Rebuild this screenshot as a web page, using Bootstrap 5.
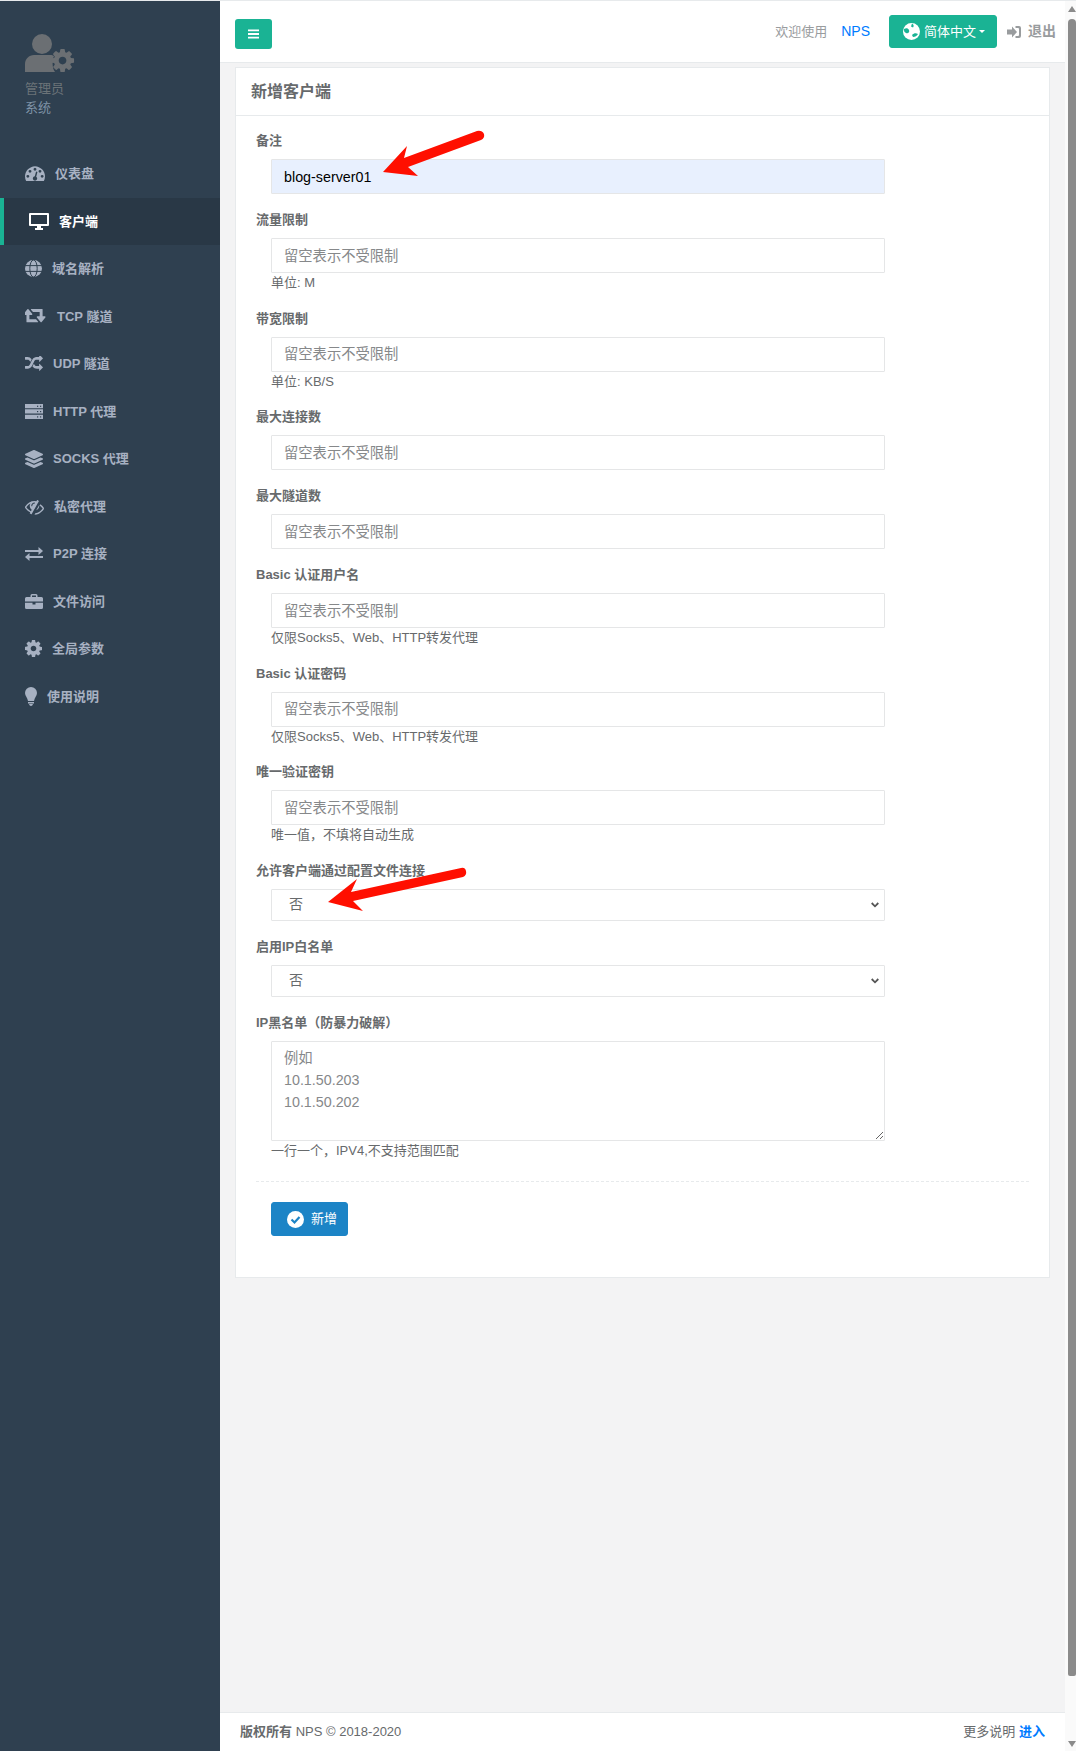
<!DOCTYPE html>
<html lang="zh-CN">
<head>
    <meta charset="UTF-8">
    <meta name="viewport" content="width=device-width, initial-scale=1.0">
    <title>新增客户端</title>
    <link href="https://cdn.jsdelivr.net/npm/bootstrap@5.3.0/dist/css/bootstrap.min.css" rel="stylesheet">
    <style>
        body {
            font-family: "Liberation Sans", "Noto Sans CJK SC", sans-serif;
            font-size: 13px;
            color: #676a6c;
            background: #f3f3f4;
            overflow: hidden;
        }
        .page-wrap { height: 1751px; border-top: 1px solid #e7eaec; }

        .side-bar { width: 220px; background: #2f4050; flex: none; }
        .side-head { height: 149px; padding: 32px 0 0 25px; }
        .side-head svg { display: block; }
        .side-role { margin-top: 6px; line-height: 19px; color: #6b7378; font-size: 13px; }
        .side-sys { line-height: 19px; color: #7f93a7; font-size: 13px; }
        .side-bar .nav-link {
            height: 47.5px;
            padding: 0 0 0 25px;
            gap: 10px;
            color: #a7b1c2;
            font-weight: 600;
            font-size: 13px;
        }
        .side-bar .nav-link.active {
            background: #293846;
            border-left: 4px solid #1ab394;
            color: #fff;
        }

        .top-bar { height: 62px; background: #fff; border-bottom: 1px solid #e7eaec; padding: 0 9px 0 15px; }
        .menu-btn { width: 37px; height: 30px; background: #1ab394; border-radius: 3px; margin-top: 4px; }
        .welcome { color: #999c9e; margin-right: 14px; }
        .brand-link { color: #007bff; font-size: 14px; text-decoration: none; margin-right: 19px; }
        .lang-btn {
            width: 108px; height: 33px; padding: 0 0 0 13px;
            background: #1ab394; border-color: #1ab394; color: #fff;
            font-size: 13px; font-weight: 400; border-radius: 3px;
            gap: 4px;
        }
        .lang-btn::after { margin-left: -1px; }
        .logout { color: #999c9e; font-size: 14px; font-weight: 600; margin-left: 10px; gap: 7px; text-decoration: none; }

        .form-box { margin: 4px 15px 0; background: #fff; border: 1px solid #e7eaec; border-radius: 0; height: 1211px; }
        .form-box .card-header {
            height: 48px; padding: 0 15px; background: #fff; border-bottom: 1px solid #e7eaec;
            font-size: 16px; font-weight: 600; line-height: 47px; border-radius: 0;
        }
        .form-box .card-body { padding: 15px 20px 0; }
        .fld { margin-bottom: 16px; }
        .fld-label { display: block; line-height: 19px; margin-bottom: 9px; font-weight: 700; font-size: 13px; }
        .fld-box { width: 614px; margin-left: 15px; }
        .fld-box .form-control, .fld-box .form-select {
            border: 1px solid #e5e6e7; border-radius: 1px; font-size: 14.3px; color: #676a6c;
        }
        .fld-box .form-control { height: 35px; padding: 0 12px; }
        .fld-box .form-control::placeholder { color: #86888a; opacity: 1; }
        .fld-box .auto-filled { background: #e8f0fe; color: #000; }
        .fld-box .form-select {
            height: 32px; padding: 0 36px 0 17px; font-size: 14px;
            background-image: url("data:image/svg+xml,%3csvg xmlns='http://www.w3.org/2000/svg' viewBox='0 0 8 6'%3e%3cpath fill='none' stroke='%23555' stroke-width='1.8' d='M.7 1l3.300 3.300L7.300 1'/%3e%3c/svg%3e");
            background-position: right 5px center;
            background-size: 8px 6px;
        }
        .fld-box textarea.form-control { height: 100px; padding: 5px 12px; line-height: 22px; }
        .fld-help { line-height: 19.5px; color: #676a6c; font-size: 13px; }
        .dash-line { border-top: 1px dashed #e7eaec; margin: 21px 0 20px; }
        .save-btn {
            width: 77px; height: 34px; padding: 0 0 0 15px; margin-left: 15px;
            background: #1c84c6; border-color: #1c84c6; color: #fff;
            font-size: 13px; font-weight: 400; border-radius: 3px; gap: 7px;
        }

        .foot-bar { height: 39px; background: #fff; border-top: 1px solid #e7eaec; padding: 0 20px; margin-top: auto; }
        .foot-bar a { color: #007bff; font-weight: 700; text-decoration: none; }

        .fake-scroll { width: 11px; background: #fafafa; flex: none; }
        .fake-thumb { position: absolute; right: 0; top: 18px; width: 8px; height: 1657px; background: #8b8b8b; border-radius: 4px 4px 2px 2px; }
        .fake-up, .fake-down { position: absolute; right: 0; width: 0; height: 0; border-left: 4px solid transparent; border-right: 4px solid transparent; }
        .fake-up { top: 5px; border-bottom: 6px solid #8b8b8b; }
        .fake-down { bottom: 4px; border-top: 6px solid #8b8b8b; }

        .red-arrows { position: absolute; left: 0; top: -1px; pointer-events: none; }
    </style>
</head>
<body>
<div class="page-wrap d-flex position-relative">
    <nav class="side-bar">
        <div class="side-head">
            <svg width="50" height="40" viewBox="0 0 50 40" fill="#6b6f73">
                <circle cx="17" cy="11" r="10"/>
                <path d="M0 39v-8c0-5 4-9 9-9h16c2 0 3 .5 4 1-2 4-2 12 1 16z"/>
                <g transform="translate(24.100 14.100) scale(.015)"><path d="M1152 896q0-106-75-181t-181-75-181 75-75 181 75 181 181 75 181-75 75-181zm512-109v222q0 12-8 23t-20 13l-185 28q-19 54-39 91 35 50 107 138 10 12 10 25t-9 23q-27 37-99 108t-94 71q-12 0-26-9l-138-108q-44 23-91 38-16 136-29 186-7 28-36 28h-222q-14 0-24.500-8.500t-11.500-21.500l-28-184q-49-16-90-37l-141 107q-10 9-25 9-14 0-25-11-126-114-165-168-7-10-7-23 0-12 8-23 15-21 51-66.500t54-70.500q-27-50-41-99l-183-27q-13-2-21-12.500t-8-23.500v-222q0-12 8-23t19-13l186-28q14-46 39-92-40-57-107-138-10-12-10-24 0-10 9-23 26-36 98.500-107.500t94.500-71.500q13 0 26 10l138 107q44-23 91-38 16-136 29-186 7-28 36-28h222q14 0 24.500 8.500t11.500 21.500l28 184q49 16 90 37l142-107q9-9 24-9 13 0 25 10 129 119 165 170 7 8 7 22 0 12-8 23-15 21-51 66.500t-54 70.500q26 50 41 98l183 28q13 2 21 12.500t8 23.500z"/></g>
            </svg>
            <div class="side-role">管理员</div>
            <div class="side-sys">系统</div>
        </div>
        <div class="nav flex-column">
            <a class="nav-link d-flex align-items-center" href="#">
                <svg width="20" height="15" viewBox="0 256 1792 1280" fill="currentColor"><path d="M384 1152q0-53-37.500-90.500t-90.500-37.500-90.500 37.500-37.500 90.500 37.500 90.500 90.500 37.500 90.500-37.500 37.500-90.500zm192-448q0-53-37.500-90.500t-90.500-37.500-90.500 37.500-37.500 90.500 37.500 90.500 90.500 37.500 90.500-37.500 37.500-90.500zm428 481l101-382q6-26-7.500-48.500t-38.500-29.500-48 6.500-30 39.500l-101 382q-60 5-107 43.500t-63 98.500q-20 77 20 146t117 89 146-20 89-117q16-60-6-117t-72-91zm660-33q0-53-37.500-90.500t-90.500-37.500-90.500 37.500-37.500 90.500 37.500 90.500 90.500 37.500 90.500-37.500 37.500-90.500zm-640-640q0-53-37.500-90.500t-90.500-37.500-90.500 37.500-37.500 90.500 37.500 90.500 90.500 37.500 90.500-37.500 37.500-90.500zm448 192q0-53-37.500-90.500t-90.500-37.500-90.500 37.500-37.500 90.500 37.500 90.500 90.500 37.500 90.500-37.500 37.500-90.500zm320 448q0 261-141 483-19 29-54 29h-1402q-35 0-54-29-141-221-141-483 0-182 71-348t191-286 286-191 348-71 348 71 286 191 191 286 71 348z"/></svg>
                <span>仪表盘</span>
            </a>
            <a class="nav-link active d-flex align-items-center" href="#">
                <svg width="20" height="17" viewBox="0 0 20 17" fill="currentColor"><path d="M1 0h18a1 1 0 0 1 1 1v11a1 1 0 0 1-1 1H1a1 1 0 0 1-1-1V1a1 1 0 0 1 1-1zm1 2v9h16V2z"/><path d="M8 13h4v2h2v2H6v-2h2z"/></svg>
                <span>客户端</span>
            </a>
            <a class="nav-link d-flex align-items-center" href="#">
                <svg width="17" height="17" viewBox="0 0 17 17"><circle cx="8.500" cy="8.500" r="8.500" fill="currentColor"/><g fill="none" stroke="#2f4050" stroke-width="1"><ellipse cx="8.500" cy="8.500" rx="3.700" ry="8.500"/><path d="M0 5.600h17M0 11.400h17"/></g></svg>
                <span>域名解析</span>
            </a>
            <a class="nav-link d-flex align-items-center" href="#">
                <svg width="22" height="14" viewBox="0 256 1920 1216" fill="currentColor"><path d="M1152 1376q0 13-9.500 22.500t-22.500 9.500h-960q-8 0-13.500-2t-9-7-5.500-8-3-11.500-1-11.500v-600h-192q-26 0-45-19t-19-45q0-24 15-41l320-384q19-22 49-22t49 22l320 384q15 17 15 41 0 26-19 45t-45 19h-192v384h576q16 0 25 11l160 192q7 11 7 21zm640-416q0 24-15 41l-320 384q-20 23-49 23t-49-23l-320-384q-15-17-15-41 0-26 19-45t45-19h192v-384h-576q-16 0-25-12l-160-192q-7-9-7-20 0-13 9.500-22.500t22.500-9.500h960q8 0 13.500 2t9 7 5.500 8 3 11.500 1 11.500v600h192q26 0 45 19t19 45z"/></svg>
                <span>TCP 隧道</span>
            </a>
            <a class="nav-link d-flex align-items-center" href="#">
                <svg width="18" height="15" viewBox="0 160 1792 1472" fill="currentColor"><path d="M666 481q-60 92-137 273-22-45-37-72.500t-40.500-63.500-51-56.500-63-35-81.500-14.500h-224q-14 0-23-9t-9-23v-192q0-14 9-23t23-9h224q250 0 410 225zm1126 799q0 14-9 23l-320 320q-9 9-23 9-13 0-22.500-9.500t-9.500-22.500v-192q-32 0-85 .5t-81 1-73-1-71-5-64-10.500-63-18.500-58-28.500-59-40-55-53.500-56-69.500q59-93 136-273 22 45 37 72.500t40.500 63.500 51 56.500 63 35 81.500 14.500h256v-192q0-14 9-23t23-9q12 0 24 10l319 319q9 9 9 23zm0-896q0 14-9 23l-320 320q-9 9-23 9-13 0-22.500-9.500t-9.500-22.500v-192h-256q-48 0-87 15t-69 45-51 61.500-45 77.500q-32 62-78 171-29 66-49.500 111t-54 105-64 100-74 83-90 68.500-106.500 42-128 16.500h-224q-14 0-23-9t-9-23v-192q0-14 9-23t23-9h224q48 0 87-15t69-45 51-61.500 45-77.500q32-62 78-171 29-66 49.500-111t54-105 64-100 74-83 90-68.500 106.500-42 128-16.500h256v-192q0-14 9-23t23-9q12 0 24 10l319 319q9 9 9 23z"/></svg>
                <span>UDP 隧道</span>
            </a>
            <a class="nav-link d-flex align-items-center" href="#">
                <svg width="18" height="15" viewBox="0 0 18 15" fill="currentColor"><path d="M0 0h18v4.300H0zM0 5.300h18v4.300H0zM0 10.700h18V15H0z"/><g fill="#2f4050"><rect x="12" y="1.700" width="1.200" height="1.200"/><rect x="15" y="1.700" width="1.200" height="1.200"/><rect x="12" y="7" width="1.200" height="1.200"/><rect x="15" y="7" width="1.200" height="1.200"/><rect x="12" y="12.300" width="1.200" height="1.200"/><rect x="15" y="12.300" width="1.200" height="1.200"/></g></svg>
                <span>HTTP 代理</span>
            </a>
            <a class="nav-link d-flex align-items-center" href="#">
                <svg width="18" height="18" viewBox="0 0 512 512" fill="currentColor"><path d="M12.410 148.020l232.940 105.670c6.800 3.090 14.490 3.090 21.290 0l232.940-105.670c16.550-7.510 16.550-32.520 0-40.030L266.650 2.310a25.607 25.607 0 0 0-21.290 0L12.410 107.980c-16.550 7.510-16.550 32.530 0 40.040zm487.180 88.280l-58.090-26.330-161.640 73.270c-7.560 3.430-15.590 5.170-23.860 5.170s-16.290-1.740-23.860-5.170L70.510 209.970l-58.100 26.330c-16.550 7.500-16.550 32.500 0 40l232.940 105.590c6.800 3.080 14.490 3.080 21.290 0L499.590 276.300c16.550-7.500 16.550-32.500 0-40zm0 127.800l-57.870-26.230-161.860 73.370c-7.560 3.430-15.590 5.170-23.860 5.170s-16.290-1.740-23.860-5.170L70.290 337.870 12.410 364.100c-16.550 7.500-16.550 32.500 0 40l232.940 105.590c6.800 3.080 14.490 3.080 21.290 0L499.590 404.100c16.550-7.500 16.550-32.500 0-40z"/></svg>
                <span>SOCKS 代理</span>
            </a>
            <a class="nav-link d-flex align-items-center" href="#">
                <svg width="19" height="17" viewBox="0 128 1792 1536" fill="currentColor"><path d="M555 1335l78-141q-87-63-136-159t-49-203q0-121 61-225-229 117-381 353 167 258 427 375zm389-759q0-20-14-34t-34-14q-125 0-214.500 89.500t-89.500 214.500q0 20 14 34t34 14 34-14 14-34q0-86 61-147t147-61q20 0 34-14t14-34zm363-191q0 7-1 9-106 189-316 567t-315 566l-49 89q-10 16-28 16-12 0-134-70-16-10-16-28 0-12 44-87-143-65-263.500-173t-208.500-245q-20-31-20-69t20-69q153-235 380-371t496-136q89 0 180 17l54-97q10-16 28-16 5 0 18 6t31 15.500 33 18.500 31.500 18.500 19.500 11.500q16 10 16 27zm37 447q0 139-79 253.500t-209 164.500l280-502q8 45 8 84zm448 256q0 35-20 69-39 64-109 145-150 172-347.500 267t-419.500 95l74-132q212-18 392.500-137t301.500-307q-115-179-282-294l63-112q95 64 182.500 153t144.500 184q20 34 20 69z"/></svg>
                <span>私密代理</span>
            </a>
            <a class="nav-link d-flex align-items-center" href="#">
                <svg width="18" height="14" viewBox="0 0 18 14" fill="currentColor"><path d="M0 3h13.500V0L18 4l-4.500 4V5H0z"/><path d="M18 9H4.500V6L0 10l4.500 4v-3H18z"/></svg>
                <span>P2P 连接</span>
            </a>
            <a class="nav-link d-flex align-items-center" href="#">
                <svg width="18" height="15" viewBox="0 0 18 15" fill="currentColor"><path d="M5.500 3V1.500Q5.500 0 7 0h4q1.500 0 1.500 1.500V3H11V1.500H7V3z"/><path d="M1.500 3h15Q18 3 18 4.500V7.500H0v-3Q0 3 1.500 3zM0 8.700h7.500V10.500h3V8.700H18v4.800q0 1.500-1.500 1.500h-15Q0 15 0 13.500z"/></svg>
                <span>文件访问</span>
            </a>
            <a class="nav-link d-flex align-items-center" href="#">
                <svg width="17" height="17" viewBox="128 128 1536 1536" fill="currentColor"><path d="M1152 896q0-106-75-181t-181-75-181 75-75 181 75 181 181 75 181-75 75-181zm512-109v222q0 12-8 23t-20 13l-185 28q-19 54-39 91 35 50 107 138 10 12 10 25t-9 23q-27 37-99 108t-94 71q-12 0-26-9l-138-108q-44 23-91 38-16 136-29 186-7 28-36 28h-222q-14 0-24.500-8.500t-11.500-21.500l-28-184q-49-16-90-37l-141 107q-10 9-25 9-14 0-25-11-126-114-165-168-7-10-7-23 0-12 8-23 15-21 51-66.500t54-70.500q-27-50-41-99l-183-27q-13-2-21-12.500t-8-23.500v-222q0-12 8-23t19-13l186-28q14-46 39-92-40-57-107-138-10-12-10-24 0-10 9-23 26-36 98.500-107.500t94.500-71.500q13 0 26 10l138 107q44-23 91-38 16-136 29-186 7-28 36-28h222q14 0 24.500 8.500t11.500 21.500l28 184q49 16 90 37l142-107q9-9 24-9 13 0 25 10 129 119 165 170 7 8 7 22 0 12-8 23-15 21-51 66.500t-54 70.500q26 50 41 98l183 28q13 2 21 12.500t8 23.500z"/></svg>
                <span>全局参数</span>
            </a>
            <a class="nav-link d-flex align-items-center" href="#">
                <svg width="12" height="19" viewBox="0 0 12 19" fill="currentColor"><path d="M6 0a6 6 0 0 1 6 6c0 3-2.500 4.500-3 8H3C2.500 10.500 0 9 0 6a6 6 0 0 1 6-6z"/><path d="M3 15h6v1.500H3zM4 17h4q-.5 2-2 2t-2-2z"/></svg>
                <span>使用说明</span>
            </a>
        </div>
    </nav>

    <main class="d-flex flex-column flex-grow-1">
        <div class="top-bar d-flex align-items-center">
            <button class="btn menu-btn d-flex align-items-center justify-content-center" type="button">
                <svg width="12" height="10" viewBox="0 0 12 10" fill="#fff"><path d="M0 0h12v2H0zM0 4h12v2H0zM0 8h12v2H0z"/></svg>
            </button>
            <span class="welcome ms-auto">欢迎使用</span>
            <a class="brand-link" href="#">NPS</a>
            <button class="btn lang-btn d-flex align-items-center dropdown-toggle" type="button">
                <svg width="17" height="17" viewBox="0 0 17 17"><circle cx="8.500" cy="8.500" r="8.500" fill="#fff"/><path fill="#1ab394" d="M1 6c2-1 4-1 5 1s-1 4-3 3-2-2-2-4zM9 12c2-2 4-2 6-1-1 2-3 3-5 3zM9 .5c2 1 2 3 1 4l-2-1z"/></svg>
                <span>简体中文</span>
            </button>
            <a class="logout d-flex align-items-center" href="#">
                <svg width="14" height="12" viewBox="0 0 14 12" fill="currentColor"><path d="M0 3.500h5V.5l5 5.500-5 5.500v-3H0z"/><path d="M8.500 0H12q2 0 2 2v8q0 2-2 2H8.500v-2H11q1 0 1-1V3q0-1-1-1H8.500z"/></svg>
                <span>退出</span>
            </a>
        </div>

        <div class="card form-box">
            <div class="card-header">新增客户端</div>
            <div class="card-body">
                <div class="fld">
                    <label class="fld-label">备注</label>
                    <div class="fld-box"><input class="form-control auto-filled" type="text" value="blog-server01"></div>
                </div>
                <div class="fld">
                    <label class="fld-label">流量限制</label>
                    <div class="fld-box"><input class="form-control" type="text" placeholder="留空表示不受限制"><div class="fld-help">单位: M</div></div>
                </div>
                <div class="fld">
                    <label class="fld-label">带宽限制</label>
                    <div class="fld-box"><input class="form-control" type="text" placeholder="留空表示不受限制"><div class="fld-help">单位: KB/S</div></div>
                </div>
                <div class="fld">
                    <label class="fld-label">最大连接数</label>
                    <div class="fld-box"><input class="form-control" type="text" placeholder="留空表示不受限制"></div>
                </div>
                <div class="fld">
                    <label class="fld-label">最大隧道数</label>
                    <div class="fld-box"><input class="form-control" type="text" placeholder="留空表示不受限制"></div>
                </div>
                <div class="fld">
                    <label class="fld-label">Basic 认证用户名</label>
                    <div class="fld-box"><input class="form-control" type="text" placeholder="留空表示不受限制"><div class="fld-help">仅限Socks5、Web、HTTP转发代理</div></div>
                </div>
                <div class="fld">
                    <label class="fld-label">Basic 认证密码</label>
                    <div class="fld-box"><input class="form-control" type="text" placeholder="留空表示不受限制"><div class="fld-help">仅限Socks5、Web、HTTP转发代理</div></div>
                </div>
                <div class="fld">
                    <label class="fld-label">唯一验证密钥</label>
                    <div class="fld-box"><input class="form-control" type="text" placeholder="留空表示不受限制"><div class="fld-help">唯一值，不填将自动生成</div></div>
                </div>
                <div class="fld">
                    <label class="fld-label">允许客户端通过配置文件连接</label>
                    <div class="fld-box"><select class="form-select"><option>否</option><option>是</option></select></div>
                </div>
                <div class="fld">
                    <label class="fld-label">启用IP白名单</label>
                    <div class="fld-box"><select class="form-select"><option>否</option><option>是</option></select></div>
                </div>
                <div class="fld mb-0">
                    <label class="fld-label">IP黑名单（防暴力破解）</label>
                    <div class="fld-box"><textarea class="form-control" placeholder="例如&#10;10.1.50.203&#10;10.1.50.202"></textarea><div class="fld-help">一行一个，IPV4,不支持范围匹配</div></div>
                </div>
                <div class="dash-line"></div>
                <button class="btn save-btn d-flex align-items-center" type="button">
                    <svg width="17" height="17" viewBox="0 0 17 17"><circle cx="8.500" cy="8.500" r="8.500" fill="#fff"/><path fill="none" stroke="#1c84c6" stroke-width="2.200" d="M4.500 8.500l3 3 5-5.500"/></svg>
                    <span>新增</span>
                </button>
            </div>
        </div>

        <div class="foot-bar d-flex align-items-center justify-content-between">
            <div><strong>版权所有</strong> NPS © 2018-2020</div>
            <div>更多说明 <a href="#">进入</a></div>
        </div>
    </main>

    <div class="fake-scroll position-relative">
        <div class="fake-up"></div>
        <div class="fake-thumb"></div>
        <div class="fake-down"></div>
    </div>

    <svg class="red-arrows" width="1076" height="1751" viewBox="0 0 1076 1751" fill="#ff0f00">
        <path d="M383 172L407 146 404 158 477 131Q482 130 484 134 485 138 481 140L408 167 418 176z"/>
        <path d="M328 902L357 879 351 892 461 868Q465 867 466 871 467 875 463 877L353 901 363 911z"/>
    </svg>
</div>
<script src="https://cdn.jsdelivr.net/npm/bootstrap@5.3.0/dist/js/bootstrap.bundle.min.js"></script>
</body>
</html>
